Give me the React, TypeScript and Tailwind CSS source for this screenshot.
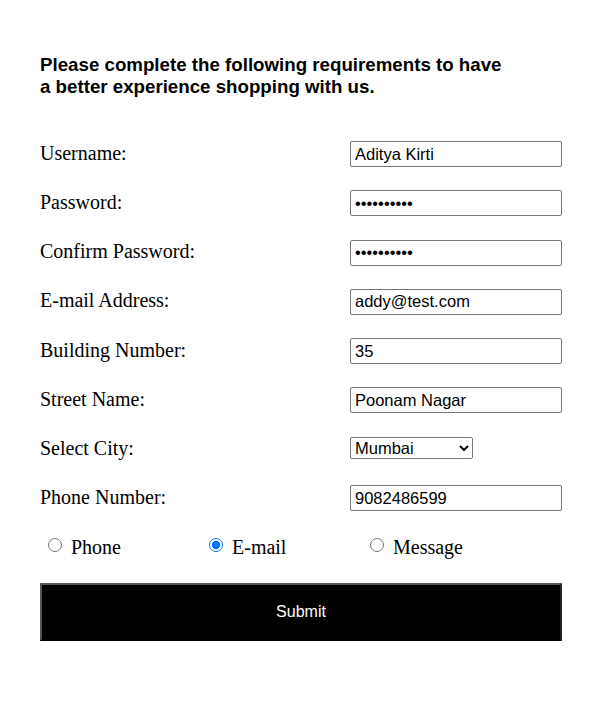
import { useState } from "react";

const fields = [
  { label: "Username:", type: "text", value: "Aditya Kirti" },
  { label: "Password:", type: "password", value: "aditya1234" },
  { label: "Confirm Password:", type: "password", value: "aditya1234" },
  { label: "E-mail Address:", type: "text", value: "addy@test.com" },
  { label: "Building Number:", type: "text", value: "35" },
  { label: "Street Name:", type: "text", value: "Poonam Nagar" },
];

const inputCls =
  "w-[212px] h-[26px] border border-[#767676] rounded-[2px] px-[4px] text-[16.5px] text-black font-['Liberation_Sans',Arial,sans-serif] bg-white";

const labelCls = "text-[20px] leading-[23px] pb-[2px]";

export default function App() {
  const [contact, setContact] = useState("email");

  return (
    <div className="min-h-screen bg-white px-10 pt-[54px] font-['Liberation_Serif','Times_New_Roman',serif] text-black">
      <h3 className="font-['Liberation_Sans',Arial,sans-serif] text-[18.72px] leading-[22px] font-bold">
        Please complete the following requirements to have
        <br />
        a better experience shopping with us.
      </h3>

      <form className="mt-[43px] w-[522px] flex flex-col gap-[23.3px]">
        {fields.map((f) => (
          <div key={f.label} className="flex items-center justify-between">
            <label className={labelCls}>{f.label}</label>
            <input type={f.type} defaultValue={f.value} className={inputCls} />
          </div>
        ))}

        <div className="flex items-center justify-between">
          <label className={labelCls}>Select City:</label>
          <div className="w-[212px]">
            <select
              defaultValue="Mumbai"
              className="w-[123px] h-[22px] border border-[#767676] rounded-[2px] text-[16.5px] font-['Liberation_Sans',Arial,sans-serif] bg-white text-black"
            >
              <option>Mumbai</option>
              <option>Delhi</option>
              <option>Pune</option>
              <option>Chennai</option>
            </select>
          </div>
        </div>

        <div className="flex items-center justify-between">
          <label className={labelCls}>Phone Number:</label>
          <input type="text" defaultValue="9082486599" className={inputCls} />
        </div>

        {/* preferred contact */}
        <div className="flex items-center h-[23px]">
          {[
            { id: "phone", label: "Phone" },
            { id: "email", label: "E-mail" },
            { id: "message", label: "Message" },
          ].map((r) => (
            <label key={r.id} className="w-[161px] pl-2 flex items-center gap-[9px] text-[20px] leading-[23px]">
              <input
                type="radio"
                name="contact"
                checked={contact === r.id}
                onChange={() => setContact(r.id)}
                className="m-0 w-[14px] h-[14px] -mt-[1px]"
              />
              <span className="pt-[4px]">{r.label}</span>
            </label>
          ))}
        </div>

        <button
          type="button"
          className="mt-[2px] h-[58px] w-full bg-black text-white text-[16px] font-['Liberation_Sans',Arial,sans-serif] border-2 border-t-[#555] border-l-[#555] border-r-[#222] border-b-black"
        >
          Submit
        </button>
      </form>
    </div>
  );
}
